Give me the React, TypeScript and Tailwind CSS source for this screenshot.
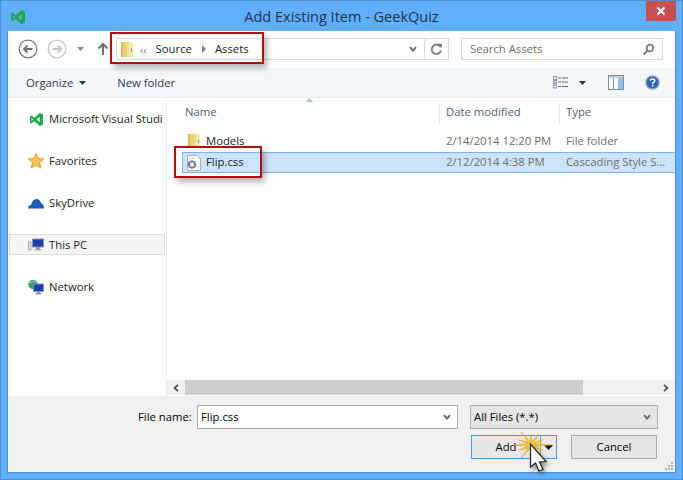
import React from "react";

const VS = ({ s = 16 }: { s?: number }) => (
  <svg width={s} height={s} viewBox="0 0 16 16" className="shrink-0">
    <path d="M11.5 1 L15 2.6 V13.4 L11.5 15 L5.6 9.9 L2.6 12.2 L1 11.3 V4.7 L2.6 3.8 L5.6 6.1 Z M11.5 5 L8 8 L11.5 11 Z M2.8 6.3 V9.7 L4.5 8 Z" fill="#1fa84f" fillRule="evenodd" />
  </svg>
);

const Folder = ({ h = 16 }: { h?: number }) => (
  <svg width="14" height={h} viewBox="0 0 14 16" preserveAspectRatio="none" className="shrink-0">
    <path d="M1 1 H9 L13 2 V15 H1 Z" fill="#f3dc8c" />
    <path d="M1 1 H7 V15 H1 Z" fill="#ecd078" />
    <path d="M1 1 H3 V15 H1 Z" fill="#dfb94f" />
    <path d="M9 1 L13 2 V13 L9 15 Z" fill="#f8e8ae" />
    <rect x="11" y="7" width="1" height="3" fill="#7d8fa0" />
  </svg>
);

const Circle = ({ dim }: { dim?: boolean }) => (
  <svg width="20" height="20" viewBox="0 0 20 20">
    <circle cx="10" cy="10" r="8.8" fill="#fff" stroke={dim ? "#c6c6c6" : "#7a7a7a"} strokeWidth="1.3" />
    {dim ? (
      <path d="M5.5 10 H14 M10.5 6.5 L14 10 L10.5 13.5" fill="none" stroke="#c6c6c6" strokeWidth="1.8" />
    ) : (
      <path d="M14.5 10 H6 M9.5 6.5 L6 10 L9.5 13.5" fill="none" stroke="#6f6f6f" strokeWidth="1.8" />
    )}
  </svg>
);

const Chevron = () => (
  <svg width="8" height="7" viewBox="0 0 8 7" className="shrink-0">
    <path d="M1 1.2 L4 4.6 L7 1.2" fill="none" stroke="#5f6468" strokeWidth="1.8" />
  </svg>
);

const Nav = ({ icon, label }: { icon: React.ReactNode; label: string }) => (
  <div className="flex items-center gap-[5px] h-5 pl-[20px] mr-[3px] whitespace-nowrap overflow-hidden text-[#1c1c1c]">
    <span className="w-[16px] h-[16px] flex items-center justify-center shrink-0">{icon}</span>
    <span>{label}</span>
  </div>
);

const sparkRadii = [20, 7, 14, 7, 21, 7, 14, 7, 20, 7, 14, 7, 18, 7, 14, 7, 20, 7, 14, 7, 17, 7, 14, 7];
const sparkPath =
  "M" +
  sparkRadii
    .map((r, i) => {
      const a = (i / sparkRadii.length) * Math.PI * 2;
      const rx = r * (i % 2 ? 0.55 : 1);
      const ry = r * (i % 2 ? 0.55 : 0.75);
      return `${(19 + rx * Math.cos(a)).toFixed(1)} ${(14 + ry * Math.sin(a)).toFixed(1)}`;
    })
    .join(" L") +
  " Z";

export default function App() {
  return (
    <div className="relative w-[683px] h-[480px] overflow-hidden bg-[#61aefc] border border-[#4d90d0] flex flex-col text-[11.3px] leading-[16px] text-[#1c1c1c] font-['Open_Sans','Noto_Sans',sans-serif]">
      {/* title bar */}
      <div className="relative h-[30px] shrink-0 flex items-center justify-center text-[#23344a] text-[14.5px] pt-[1px]">
        <span className="absolute left-[9px] top-[8px]"><VS s={16} /></span>
        <span>Add Existing Item - GeekQuiz</span>
        <div className="absolute right-[6px] top-0 w-[30px] h-[20px] bg-[#c75050] flex items-center justify-center">
          <svg width="10" height="10" viewBox="0 0 10 10"><path d="M1.5 1.5 L8.5 8.5 M8.5 1.5 L1.5 8.5" stroke="#fff" strokeWidth="2" /></svg>
        </div>
      </div>

      {/* client */}
      <div className="flex-1 mx-[6px] mb-[6px] flex flex-col bg-white border-b border-[#4d90d0] border-x-[1px] border-x-[#4d90d0] min-h-0">
        {/* nav row */}
        <div className="h-[37px] shrink-0 flex items-center pb-[1px]">
          <div className="ml-[10px] flex items-center gap-[9px]">
            <Circle />
            <Circle dim />
          </div>
          <svg width="7" height="4" viewBox="0 0 7 4" className="ml-[10px] shrink-0"><path d="M0 0 H7 L3.5 4 Z" fill="#8a8a8a" /></svg>
          <svg width="12" height="14" viewBox="0 0 12 14" className="ml-[13px] shrink-0"><path d="M6 13 V2 M1.5 6.5 L6 2 L10.5 6.5" fill="none" stroke="#6f6f6f" strokeWidth="2" /></svg>
          <div className="ml-[7px] w-[308px] shrink-0 h-[22px] border border-[#d9d9d9] border-r-0 flex items-center pr-[7px]">
            <span className="ml-[3px]"><Folder h={17} /></span>
            <span className="ml-[6px] text-[#7a7a7a] text-[11px] leading-none">‹‹</span>
            <span className="ml-[9px]">Source</span>
            <svg width="4" height="8" viewBox="0 0 4 8" className="ml-[10px]"><path d="M0 0 L4 4 L0 8 Z" fill="#7f7f7f" /></svg>
            <span className="ml-[9px]">Assets</span>
            <span className="ml-auto"><Chevron /></span>
          </div>
          <div className="w-[25px] shrink-0 h-[22px] border border-[#d9d9d9] flex items-center justify-center">
            <svg width="13" height="13" viewBox="0 0 13 13"><path d="M10.5 4 A4.7 4.7 0 1 0 11 7.5" fill="none" stroke="#7a7a7a" strokeWidth="1.8" /><path d="M7 0.5 L11.8 1 V5.5 Z" fill="#7a7a7a" /></svg>
          </div>
          <div className="ml-[12px] w-[202px] shrink-0 h-[22px] border border-[#d9d9d9] flex items-center pl-[8px] pr-[7px] text-[#6d6d6d]">
            <span>Search Assets</span>
            <svg width="13" height="13" viewBox="0 0 13 13" className="ml-auto"><circle cx="8" cy="5" r="3.3" fill="none" stroke="#7a7a7a" strokeWidth="1.8" /><path d="M5.5 7.5 L1.5 11.5" stroke="#7a7a7a" strokeWidth="2.2" /></svg>
          </div>
        </div>

        {/* toolbar */}
        <div className="h-[30px] shrink-0 bg-[#f5f6f7] flex items-center text-[#1e395b] pl-[18px] border-b border-[#ececec]">
          <span>Organize</span>
          <svg width="7" height="4" viewBox="0 0 7 4" className="ml-[6px]"><path d="M0 0 H7 L3.5 4 Z" fill="#1e395b" /></svg>
          <span className="ml-[31px]">New folder</span>
          <svg width="16" height="13" viewBox="0 0 16 13" className="ml-auto">
            <g fill="none" stroke="#8b98a8"><rect x="0.5" y="0.5" width="3" height="3" /><rect x="0.5" y="4.5" width="3" height="3" /><rect x="0.5" y="9" width="3" height="3" /></g>
            <rect x="1.5" y="5.5" width="1" height="1" fill="#d83030" />
            <path d="M5 2 H8 M9 2 H15 M5 6 H8 M9 6 H15 M5 10.5 H8 M9 10.5 H15" stroke="#5a6a80" />
          </svg>
          <svg width="7" height="4" viewBox="0 0 7 4" className="ml-[10px]"><path d="M0 0 H7 L3.5 4 Z" fill="#1e395b" /></svg>
          <svg width="16" height="15" viewBox="0 0 16 15" className="ml-[22px]">
            <rect x="0.5" y="0.5" width="15" height="14" fill="#fff" stroke="#7f8b98" />
            <rect x="1" y="1" width="14" height="2" fill="#c4ccd6" />
            <rect x="5" y="3" width="1" height="11" fill="#7f8b98" />
            <rect x="10" y="3" width="5" height="11" fill="#8cc0f0" />
          </svg>
          <svg width="15" height="15" viewBox="0 0 15 15" className="ml-[21px] mr-[15px]">
            <circle cx="7.5" cy="7.5" r="6.6" fill="#2f62c4" stroke="#9aa4b2" strokeWidth="1.3" />
            <path d="M5.3 5.6 C5.5 3.4 9.8 3.3 9.8 5.6 C9.8 7.2 7.6 7.2 7.6 9" fill="none" stroke="#fff" strokeWidth="1.5" />
            <rect x="6.8" y="10" width="1.6" height="1.6" fill="#fff" />
          </svg>
        </div>

        {/* main */}
        <div className="flex-1 min-h-0 flex">
          <div className="w-[159px] shrink-0 border-r border-[#ececec] pt-[11px] flex flex-col">
            <Nav icon={<VS s={15} />} label="Microsoft Visual Studio" />
            <div className="h-[22px]" />
            <Nav label="Favorites" icon={
              <svg width="16" height="16" viewBox="0 0 16 16"><path d="M8 0.5 L10.2 5.6 L15.7 6 L11.5 9.6 L12.8 15 L8 12.1 L3.2 15 L4.5 9.6 L0.3 6 L5.8 5.6 Z" fill="#f8c24e" stroke="#e8922a" strokeWidth="0.9" /></svg>
            } />
            <div className="h-[22px]" />
            <Nav label="SkyDrive" icon={
              <svg width="16" height="11" viewBox="0 0 16 11"><path d="M0 10.5 C0 8 1.5 7 3 7 C4 3 6 1 8.5 1 C11 1 12.5 3 13 5 C15 5.5 16 7.5 16 10.5 Z" fill="#1b5db8" /></svg>
            } />
            <div className="h-[21px]" />
            <div className="h-[21px] mx-[1px] bg-[#f5f5f5] border border-[#dcdcdc] flex items-center gap-[5px] pl-[18px]">
              <span className="w-[16px] h-[16px] shrink-0 flex items-center justify-center">
                <svg width="16" height="14" viewBox="0 0 16 14"><rect x="0.5" y="4" width="2.5" height="8" fill="#dfe3e6" stroke="#7d8a8f" strokeWidth="0.6" /><rect x="4.5" y="1" width="11" height="8" fill="#1a3fb0" stroke="#8a96a3" /><rect x="8" y="9" width="4" height="2" fill="#8a96a3" /><rect x="6.5" y="11" width="7" height="1.5" fill="#a5aeb6" /></svg>
              </span>
              <span>This PC</span>
            </div>
            <div className="h-[22px]" />
            <Nav label="Network" icon={
              <svg width="16" height="16" viewBox="0 0 16 16"><circle cx="5" cy="5.5" r="4.7" fill="#3a9c4c" /><path d="M1.5 4 Q5 1 8 3" fill="none" stroke="#7ec4e8" strokeWidth="1.5" /><rect x="5.5" y="5" width="10" height="7.5" fill="#1a3fb0" stroke="#8a96a3" /><rect x="9" y="12.5" width="3" height="1.5" fill="#8a96a3" /><rect x="7.5" y="14" width="6" height="1.2" fill="#77828c" /></svg>
            } />
          </div>

          <div className="flex-1 min-w-0 flex flex-col">
            <div className="relative flex-1 min-h-0">
              {/* header */}
              <div className="relative h-[28px] flex text-[#4c607a] pt-[6px]">
                <div className="w-[273px] pl-[18px] border-r border-[#e5e5e5] h-[19px]">Name</div>
                <div className="w-[120px] pl-[6px] border-r border-[#e5e5e5] h-[19px]">Date modified</div>
                <div className="pl-[6px]">Type</div>
                <svg width="7" height="4" viewBox="0 0 7 4" className="absolute left-[139px] top-0"><path d="M0 4 L3.5 0 L7 4 Z" fill="#a3c4de" /></svg>
              </div>
              <div className="h-[5px]" />
              <div className="h-[21px] flex items-center pb-[1px] text-[#6d6d6d] whitespace-nowrap">
                <div className="w-[273px] pl-[20px] flex items-center gap-[5px] text-[#1c1c1c]"><Folder /><span>Models</span></div>
                <div className="w-[120px] pl-[6px]">2/14/2014 12:20 PM</div>
                <div className="pl-[6px]">File folder</div>
              </div>
              <div className="h-[21px] ml-[15px] flex items-center bg-[#cce4fb] border-y border-l border-[#7db4e6] text-[#6d6d6d] whitespace-nowrap">
                <div className="w-[257px] pl-[3px] flex items-center gap-[4px] text-[#1c1c1c]">
                  <svg width="16" height="16" viewBox="0 0 16 16" className="shrink-0">
                    <path d="M1.5 0.5 H11 L14.5 4 V15.5 H1.5 Z" fill="#fff" stroke="#a8aeb4" />
                    <path d="M4 3 H9" stroke="#c8ccd0" />
                    <circle cx="6" cy="9.5" r="3.2" fill="none" stroke="#7a8794" strokeWidth="1.8" />
                    <path d="M6 4.8 V14.2 M1.3 9.5 H10.7 M2.8 6.3 L9.2 12.7 M9.2 6.3 L2.8 12.7" stroke="#7a8794" strokeWidth="1" />
                    <circle cx="6" cy="9.5" r="2" fill="#e5e9ee" />
                  </svg>
                  <span className="pb-[1px]">Flip.css</span>
                </div>
                <div className="w-[120px] pl-[6px] pb-[1px]">2/12/2014 4:38 PM</div>
                <div className="pl-[6px] pb-[1px]">Cascading Style S...</div>
              </div>
            </div>
            {/* scrollbar */}
            <div className="h-[15px] shrink-0 mb-[1px] flex items-center bg-[#f0f0f0]">
              <div className="w-[18px] flex justify-center">
                <svg width="6" height="8" viewBox="0 0 6 8"><path d="M5 0.8 L1.6 4 L5 7.2" fill="none" stroke="#505050" strokeWidth="1.8" /></svg>
              </div>
              <div className="w-[398px] h-full bg-[#cdcdcd]" />
              <div className="ml-auto w-[18px] flex justify-center">
                <svg width="6" height="8" viewBox="0 0 6 8"><path d="M1 0.8 L4.4 4 L1 7.2" fill="none" stroke="#505050" strokeWidth="1.8" /></svg>
              </div>
            </div>
          </div>
        </div>

        {/* footer */}
        <div className="relative h-[76px] shrink-0 bg-[#f0f0f0] flex flex-col">
          <div className="mt-[9px] h-[24px] flex items-center">
            <span className="ml-[130px] w-[54px] shrink-0 whitespace-nowrap text-black">File name:</span>
            <div className="ml-[5px] w-[261px] shrink-0 h-[24px] bg-white border border-[#ababab] flex items-center pl-[3px] pr-[6px] text-black">
              <span>Flip.css</span>
              <span className="ml-auto"><Chevron /></span>
            </div>
            <div className="ml-[12px] w-[188px] shrink-0 h-[24px] bg-[#e5e5e5] border border-[#adadad] flex items-center pl-[3px] pr-[6px] text-black">
              <span>All Files (*.*)</span>
              <span className="ml-auto"><Chevron /></span>
            </div>
          </div>
          <div className="mt-[6px] h-[24px] flex items-center">
            <div className="ml-[463px] w-[86px] shrink-0 h-[24px] bg-[#e8e8e8] border border-[#3f9ae8] flex items-center text-black">
              <span className="w-[68px] text-center">Add</span>
              <span className="w-px h-full bg-[#9a9a9a]" />
              <svg width="9" height="5" viewBox="0 0 9 5" className="ml-[3px]"><path d="M0 0 H9 L4.5 5 Z" fill="#111" /></svg>
            </div>
            <div className="ml-[14px] w-[86px] shrink-0 h-[24px] bg-[#e5e5e5] border border-[#adadad] flex items-center justify-center text-black">Cancel</div>
          </div>
          <svg width="10" height="10" viewBox="0 0 10 10" className="absolute right-[1px] bottom-[1px]">
            <g fill="#b0b0b0"><rect x="7" y="1" width="2" height="2" /><rect x="4" y="4" width="2" height="2" /><rect x="7" y="4" width="2" height="2" /><rect x="1" y="7" width="2" height="2" /><rect x="4" y="7" width="2" height="2" /><rect x="7" y="7" width="2" height="2" /></g>
          </svg>
        </div>
      </div>

      {/* annotations */}
      <div className="absolute left-[109px] top-[31px] w-[154px] h-[32px] border-[2px] border-[#b30f0f] shadow-[3px_4px_6px_rgba(0,0,0,0.3)]" />
      <div className="absolute left-[173px] top-[145px] w-[88px] h-[32px] border-[2px] border-[#b30f0f] shadow-[3px_4px_6px_rgba(0,0,0,0.3)]" />
      <svg width="42" height="48" viewBox="0 0 42 48" className="absolute left-[511px] top-[430px]">
        <path d={sparkPath} fill="#f3c83a" stroke="#dca015" strokeWidth="0.5" />
      </svg>
      <svg width="42" height="48" viewBox="0 0 42 48" className="absolute left-[511px] top-[430px] drop-shadow-[2px_3px_2px_rgba(0,0,0,0.4)]">
        <path d="M18.5 13 V36 L23.5 32 L27 40 L31 38.5 L27.5 31 L34 30.5 Z" fill="#fff" stroke="#222" strokeWidth="1.2" />
      </svg>
    </div>
  );
}
